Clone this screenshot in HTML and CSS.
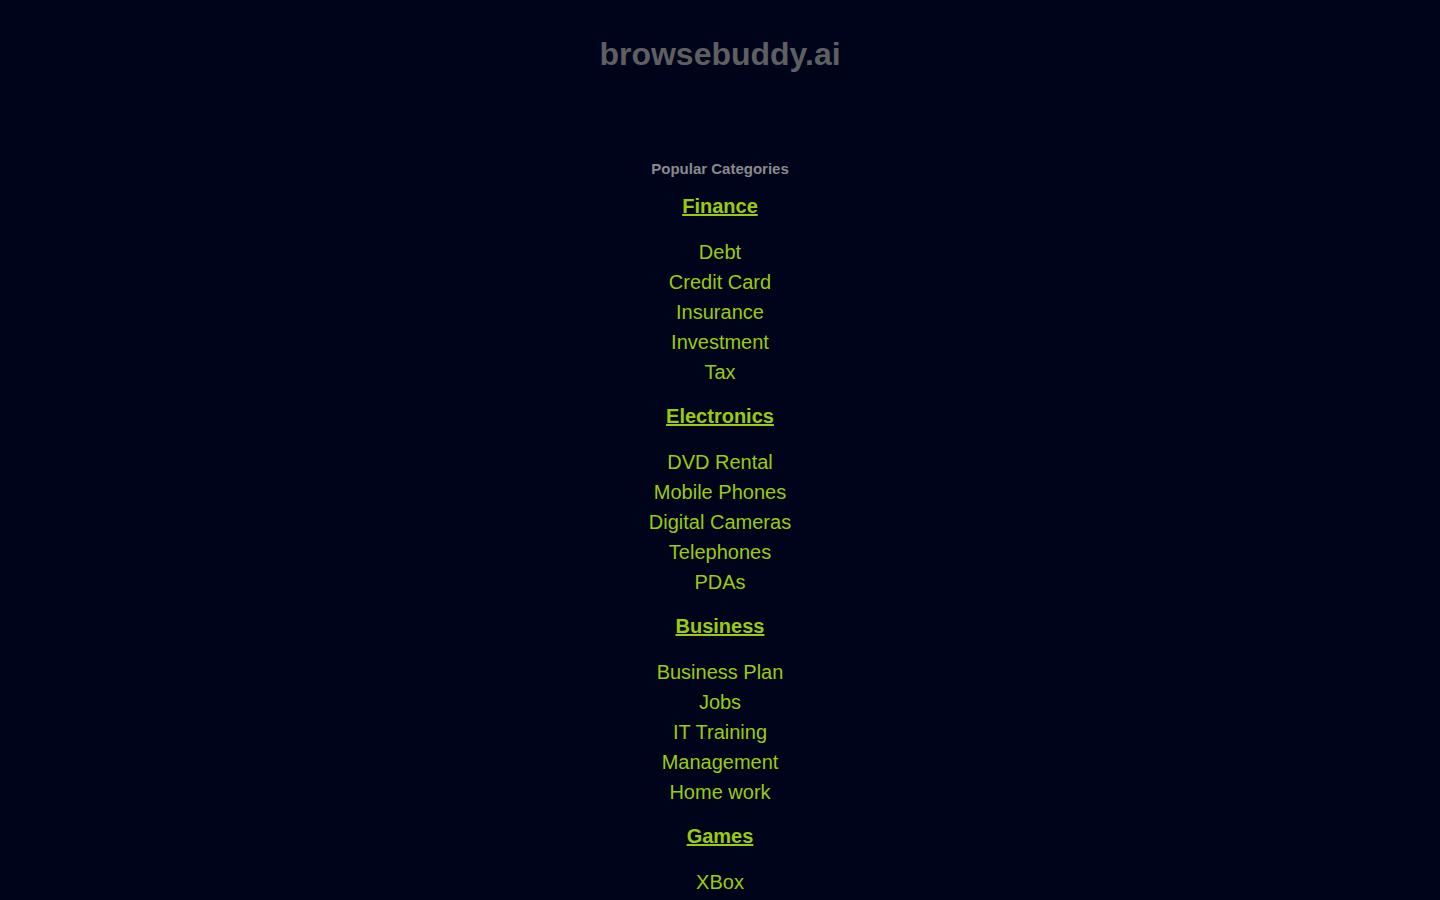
FILE: index.html
```html
<!DOCTYPE html>
<html>
<head>
<meta charset="utf-8">
<title>browsebuddy.ai</title>
<link rel="stylesheet" href="styles.css">
</head>
<body>
<div class="page">
  <h1 class="title">browsebuddy.ai</h1>
  <div class="popular">Popular Categories</div>
  <div class="section">
    <a class="cat" href="#">Finance</a>
    <ul class="items">
      <li><a href="#">Debt</a></li>
      <li><a href="#">Credit Card</a></li>
      <li><a href="#">Insurance</a></li>
      <li><a href="#">Investment</a></li>
      <li><a href="#">Tax</a></li>
    </ul>
  </div>
  <div class="section">
    <a class="cat" href="#">Electronics</a>
    <ul class="items">
      <li><a href="#">DVD Rental</a></li>
      <li><a href="#">Mobile Phones</a></li>
      <li><a href="#">Digital Cameras</a></li>
      <li><a href="#">Telephones</a></li>
      <li><a href="#">PDAs</a></li>
    </ul>
  </div>
  <div class="section">
    <a class="cat" href="#">Business</a>
    <ul class="items">
      <li><a href="#">Business Plan</a></li>
      <li><a href="#">Jobs</a></li>
      <li><a href="#">IT Training</a></li>
      <li><a href="#">Management</a></li>
      <li><a href="#">Home work</a></li>
    </ul>
  </div>
  <div class="section">
    <a class="cat" href="#">Games</a>
    <ul class="items">
      <li><a href="#">XBox</a></li>
    </ul>
  </div>
</div>
</body>
</html>
```
FILE: styles.css
```css
html, body {
  margin: 0;
  padding: 0;
  background: #00041a;
}
body {
  font-family: "Liberation Sans", Arial, sans-serif;
}
.page {
  display: flex;
  flex-direction: column;
  align-items: center;
  padding-top: 36px;
  text-align: center;
}
.title {
  margin: 0;
  font-size: 32px;
  line-height: 36px;
  font-weight: bold;
  color: #5e5f61;
}
.popular {
  margin-top: 87.5px;
  font-size: 15px;
  line-height: 17px;
  font-weight: bold;
  color: #8a8a8c;
}
.section {
  display: flex;
  flex-direction: column;
  align-items: center;
}
.cat {
  margin-top: 18px;
  font-size: 20px;
  line-height: 23px;
  font-weight: bold;
  color: #9acb0c;
  text-decoration: underline;
}
.items {
  list-style: none;
  margin: 19px 0 0 0;
  padding: 0;
}
.items li {
  font-size: 20px;
  line-height: 30px;
}
.items a {
  color: #9acb0c;
  text-decoration: none;
}
```
